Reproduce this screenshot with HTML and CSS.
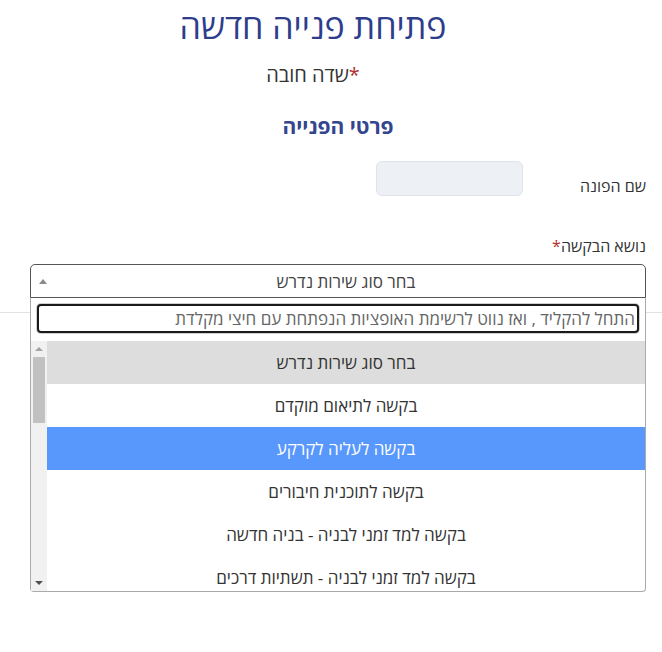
FILE: index.html
```html
<!DOCTYPE html>
<html lang="he" dir="rtl">
    <head>
        <meta charset="utf-8" />
        <title>פתיחת פנייה חדשה</title>
        <link rel="stylesheet" href="styles.css">
    </head>

    <body>
        <div class="page">
            <header class="head">
                <h1 class="title">פתיחת פנייה חדשה</h1>
                <p class="req-note"><span class="star">*</span>שדה חובה</p>
            </header>

            <main class="form">
                <h2 class="section">פרטי הפנייה</h2>

                <div class="name-row">
                    <label class="label name-label">שם הפונה</label>
                    <div class="input-locked"></div>
                </div>

                <label class="label subject-label">נושא הבקשה<span class="star">*</span></label>
                <div class="select-wrap">
                    <div class="select">
                        <span class="select-text">בחר סוג שירות נדרש</span>
                        <span class="select-arrow"></span>
                    </div>

                    <div class="dropdown">
                        <div class="search">
                            <input class="search-input" type="text" placeholder="התחל להקליד , ואז נווט לרשימת האופציות הנפתחת עם חיצי מקלדת">
                        </div>
                        <div class="results">
                            <ul class="options">
                                <li class="option selected">בחר סוג שירות נדרש</li>
                                <li class="option">בקשה לתיאום מוקדם</li>
                                <li class="option highlighted">בקשה לעליה לקרקע</li>
                                <li class="option">בקשה לתוכנית חיבורים</li>
                                <li class="option">בקשה למד זמני לבניה - בניה חדשה</li>
                                <li class="option">בקשה למד זמני לבניה - תשתיות דרכים</li>
                            </ul>
                            <div class="scrollbar">
                                <span class="sb-btn"><span class="tri-up"></span></span>
                                <span class="sb-thumb"></span>
                                <span class="sb-track"></span>
                                <span class="sb-btn"><span class="tri-down"></span></span>
                            </div>
                        </div>
                    </div>
                </div>
            </main>

            <hr class="rule">
        </div>
    </body>
</html>
```

FILE: styles.css
```css
html, body {
    height: 100%;
}
body {
    margin: 0;
    background: #ffffff;
    font-family: "Open Sans", "DejaVu Sans", "Liberation Sans", sans-serif;
    color: #333333;
}
.page {
    direction: rtl;
    min-height: 100%;
}
.head {
    text-align: center;
    padding: 4px 36px 0 0;
}
.title {
    margin: 0;
    font-size: 34px;
    line-height: 44px;
    font-weight: 400;
    color: #2d3d8c;
}
.req-note {
    margin: 14px 0 0 0;
    font-size: 20px;
    line-height: 26px;
    color: #333333;
}
.star {
    color: #b0322f;
}
.form {
    margin: 0 16px 0 30px;
}
.section {
    margin: 24px 0 0 0;
    text-align: center;
    font-size: 21px;
    line-height: 28px;
    font-weight: 700;
    color: #34458e;
}
.label {
    display: block;
    font-size: 16px;
    line-height: 20px;
    color: #333333;
}
.name-row {
    display: flex;
    align-items: flex-start;
    margin-top: 21px;
}
.name-label {
    width: 123px;
    padding-top: 15px;
}
.input-locked {
    width: 147px;
    height: 35px;
    box-sizing: border-box;
    background: #edf0f4;
    border: 1px solid #dfe3ea;
    border-radius: 6px;
}
.subject-label {
    margin-top: 40px;
}
.select-wrap {
    position: relative;
    margin-top: 8px;
}
.select {
    display: flex;
    align-items: center;
    height: 34px;
    box-sizing: border-box;
    border: 1px solid #555555;
    border-radius: 5px 5px 0 0;
    background: #ffffff;
}
.select-text {
    flex: 1;
    text-align: center;
    padding-right: 8px;
    font-size: 17px;
    color: #444444;
}
.select-arrow {
    width: 24px;
    display: flex;
    justify-content: center;
}
.select-arrow::before {
    content: "";
    border-left: 4px solid transparent;
    border-right: 4px solid transparent;
    border-bottom: 5px solid #8a8a8a;
}
.dropdown {
    position: absolute;
    z-index: 10;
    top: 100%;
    left: 0;
    right: 0;
    background: #ffffff;
    border: 1px solid #aaaaaa;
    border-top: none;
    border-radius: 0 0 4px 4px;
}
.search {
    padding: 6px 6px 8px 6px;
}
.search-input {
    display: block;
    width: 100%;
    height: 29px;
    box-sizing: border-box;
    margin: 0;
    padding: 0 2px;
    border: 2px solid #1a1a1a;
    border-radius: 4px;
    box-shadow: 0 0 0 1px #d0d0d0;
    outline: none;
    direction: rtl;
    text-align: right;
    font-family: inherit;
    font-size: 17px;
}
.search-input::placeholder {
    color: #666666;
}
.results {
    display: flex;
    height: 250px;
    overflow: hidden;
}
.options {
    flex: 1;
    margin: 0;
    padding: 0;
    list-style: none;
}
.option {
    height: 43px;
    line-height: 43px;
    text-align: center;
    font-size: 17px;
    color: #333333;
}
.selected {
    background: #dddddd;
}
.highlighted {
    background: #5897fb;
    color: #ffffff;
}
.scrollbar {
    width: 16px;
    display: flex;
    flex-direction: column;
    background: #f1f1f1;
}
.sb-btn {
    height: 16px;
    display: flex;
    align-items: center;
    justify-content: center;
}
.tri-up {
    border-left: 4px solid transparent;
    border-right: 4px solid transparent;
    border-bottom: 4px solid #a3a3a3;
}
.tri-down {
    border-left: 4px solid transparent;
    border-right: 4px solid transparent;
    border-top: 4px solid #505050;
}
.sb-thumb {
    height: 66px;
    margin: 0 2px;
    background: #c1c1c1;
}
.sb-track {
    flex: 1;
}
.rule {
    margin: 14px 0 0 0;
    border: none;
    border-top: 1px solid #e2e2e2;
}
```
